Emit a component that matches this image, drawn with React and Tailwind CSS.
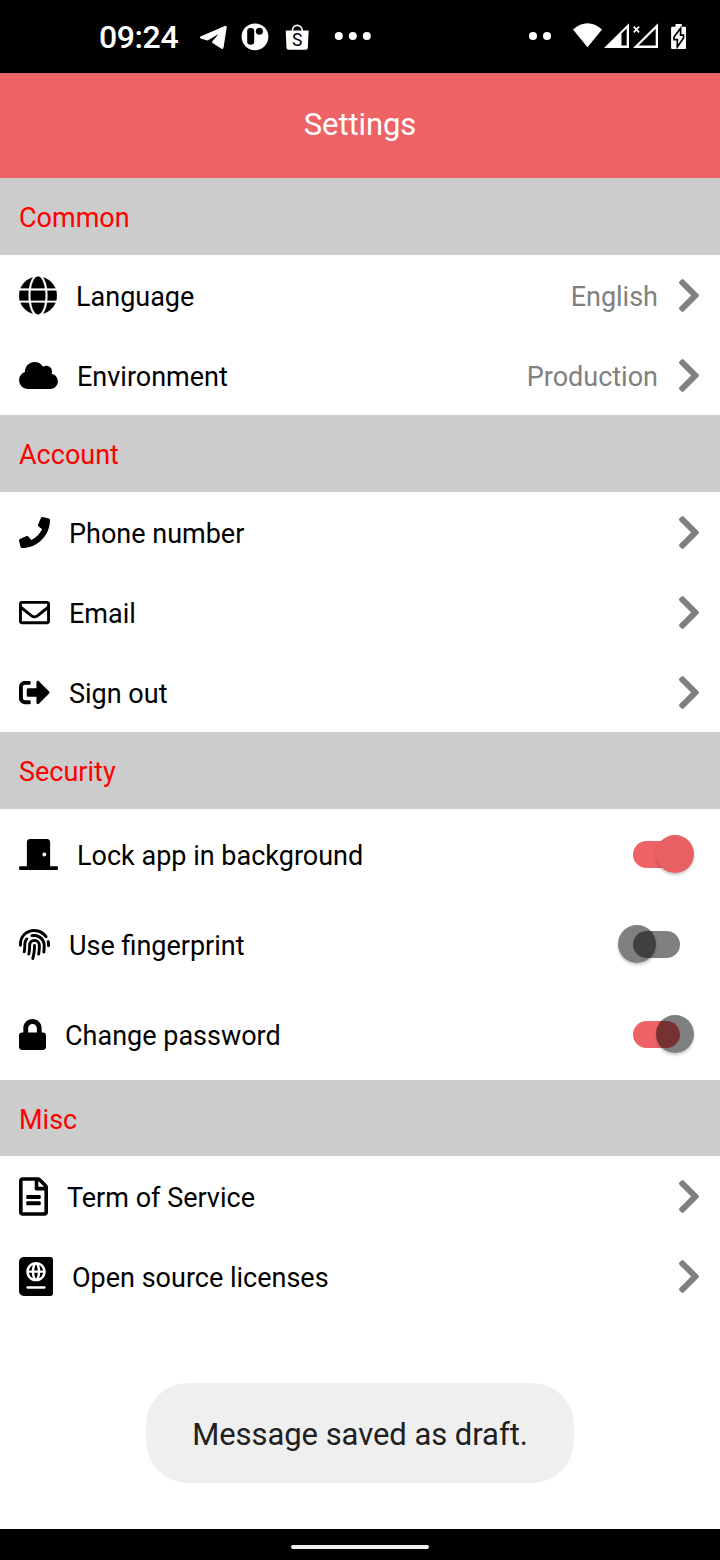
import React from "react";
import {
  FaGlobe, FaCloud, FaPhone, FaRegEnvelope, FaSignOutAlt, FaDoorClosed,
  FaFingerprint, FaLock, FaRegFileAlt, FaPassport, FaChevronRight,
} from "react-icons/fa";

function StatusBar() {
  return (
    <div className="flex h-[73px] shrink-0 items-center bg-black pl-[99px] text-white">
      <span className="w-[100px] text-[32px] font-medium leading-none tracking-[-0.4px]">09:24</span>
      <svg className="h-[73px] w-[180px]" viewBox="199 0 180 73" fill="white">
        <path d="M200.400 36.500 224.900 25.900q1.900-.5 1.800 1.500l-3.200 20.400q-.6 2-2.400.8l-8.600-5.600q-1-.8-.1-1.800L218.600 34 208.500 40.100q-1 .5-2 .2l-5.900-1.900q-1.400-.9-.2-1.900z" />
        <circle cx="255" cy="36.800" r="13.400" />
        <rect x="247.200" y="28" width="7" height="16.800" rx="3.300" fill="black" />
        <circle cx="259.400" cy="31.300" r="3.500" fill="black" />
        <path d="M285.700 30.500H308.700L307.800 48q-.2 1.700-2 1.700H288.500q-1.800 0-2-1.700z" />
        <path d="M292.300 31c0-7.500 10-7.500 10 0" fill="none" stroke="white" strokeWidth="1.700" />
        <text x="297.200" y="46" textAnchor="middle" fontSize="17.500" fill="black">S</text>
        <circle cx="338.800" cy="36" r="4" /><circle cx="352.800" cy="36" r="4" /><circle cx="366.800" cy="36" r="4" />
      </svg>
      <svg className="ml-auto h-[73px] w-[192px]" viewBox="528 0 192 73" fill="white">
        <circle cx="533" cy="36" r="4" /><circle cx="547" cy="36" r="4" />
        <path d="M573 29.500Q587.500 17 602 29.500L587.500 47.300z" />
        <path fillRule="evenodd" d="M604 48 629 23.200V48zM621.500 33.400V45.500H626.700V28.500z" />
        <path fillRule="evenodd" d="M633 48 658 23.200V48zM638.600 45.500H655.700V28.800z" />
        <path d="m633.700 26.700 5.400 5.600m0-5.600-5.400 5.600" stroke="white" strokeWidth="1.700" fill="none" />
        <path d="M675.500 24h6.200v2.700h3.200q1.100 0 1.100 1.100V48q0 1-1.100 1h-12.700q-1.100 0-1.100-1V27.800q0-1.100 1.100-1.100h3.300z" />
        <path d="M680.600 28.200 674 37V39.700H677.300V47L683.500 38V35.200H680.600z" fill="white" stroke="black" strokeWidth="1.700" />
      </svg>
    </div>
  );
}

function SectionHeader({ children, compact }) {
  return (
    <div className={[
      "flex shrink-0 items-center bg-[#ccc] pl-[19px] pt-[4px] text-[27px]",
      compact ? "h-[76px]" : "h-[77px]",
      "text-[#ff0000]",
    ].join(" ")}>
      {children}
    </div>
  );
}

function LinkRow({ icon, label, value }) {
  return (
    <div className="flex h-20 shrink-0 items-center pl-[19px] pr-[19px]">
      {icon}
      <span className="ml-[19px] pt-[4px] text-[27px]">{label}</span>
      <span className="ml-auto pt-[4px] text-[27px] text-[#808080]">{value}</span>
      <FaChevronRight className="ml-[19px] h-[39px] w-[24px] text-[#808080]" />
    </div>
  );
}

function Toggle({ on, thumb }) {
  return (
    <span className="relative mr-[14px] block h-[27px] w-[47px]">
      <span className={on ? "block size-full rounded-full bg-[#ee6366]" : "block size-full rounded-full bg-[#808080]"} />
      <span
        className={[
          "absolute top-[-6px] size-[38px] rounded-full shadow-[0_2px_3px_rgba(0,0,0,0.22)]",
          on ? "left-[23px]" : "left-[-15px]",
          thumb === "solid" ? "bg-[#e96063]" : "bg-black/50",
        ].join(" ")}
      />
    </span>
  );
}

function ToggleRow({ icon, label, on, thumb }) {
  return (
    <div className="flex h-[90px] shrink-0 items-center pl-[19px] pr-[26px]">
      {icon}
      <span className="ml-[19px] pt-[4px] text-[27px]">{label}</span>
      <span className="ml-auto">
        <Toggle on={on} thumb={thumb} />
      </span>
    </div>
  );
}

export default function App() {
  return (
    <div className="flex h-[1560px] w-[720px] flex-col overflow-hidden bg-white font-['Roboto',sans-serif] leading-none text-black">
      <StatusBar />
      <header className="flex h-[105px] shrink-0 items-center justify-center bg-[#ee6366] pb-[2px] text-[31px] tracking-[-0.1px] text-white">Settings</header>
      <SectionHeader>Common</SectionHeader>
      <LinkRow icon={<FaGlobe strokeWidth={4} className="h-[39px] w-[38px]" />} label="Language" value="English" />
      <LinkRow icon={<FaCloud className="h-[31px] w-[39px]" />} label="Environment" value="Production" />
      <SectionHeader>Account</SectionHeader>
      <LinkRow icon={<FaPhone className="size-[31px]" />} label="Phone number" />
      <LinkRow icon={<FaRegEnvelope className="size-[31px]" />} label="Email" />
      <LinkRow icon={<FaSignOutAlt className="size-[31px]" />} label="Sign out" />
      <SectionHeader>Security</SectionHeader>
      <div className="flex flex-col pb-px">
        <ToggleRow icon={<FaDoorClosed className="h-[31px] w-[39px]" />} label="Lock app in background" on thumb="solid" />
        <ToggleRow icon={<FaFingerprint className="size-[31px]" />} label="Use fingerprint" thumb="dim" />
        <ToggleRow icon={<FaLock className="h-[31px] w-[27px]" />} label="Change password" on thumb="dim" />
      </div>
      <SectionHeader compact>Misc</SectionHeader>
      <LinkRow icon={<FaRegFileAlt className="h-[39px] w-[29px]" />} label="Term of Service" />
      <LinkRow icon={<FaPassport className="h-[39px] w-[34px]" />} label="Open source licenses" />
      <div className="flex flex-1 items-start justify-center pt-[67px]">
        <div className="flex h-[100px] w-[428px] items-center justify-center rounded-[42px] bg-[#efefef] pt-[3px] text-[31px] tracking-[-0.05px] text-[#202020]">
          Message saved as draft.
        </div>
      </div>
      <div className="flex h-[31px] shrink-0 items-center justify-center bg-black pt-[5px]">
        <div className="h-1 w-[138px] rounded-full bg-[#eee]" />
      </div>
    </div>
  );
}
